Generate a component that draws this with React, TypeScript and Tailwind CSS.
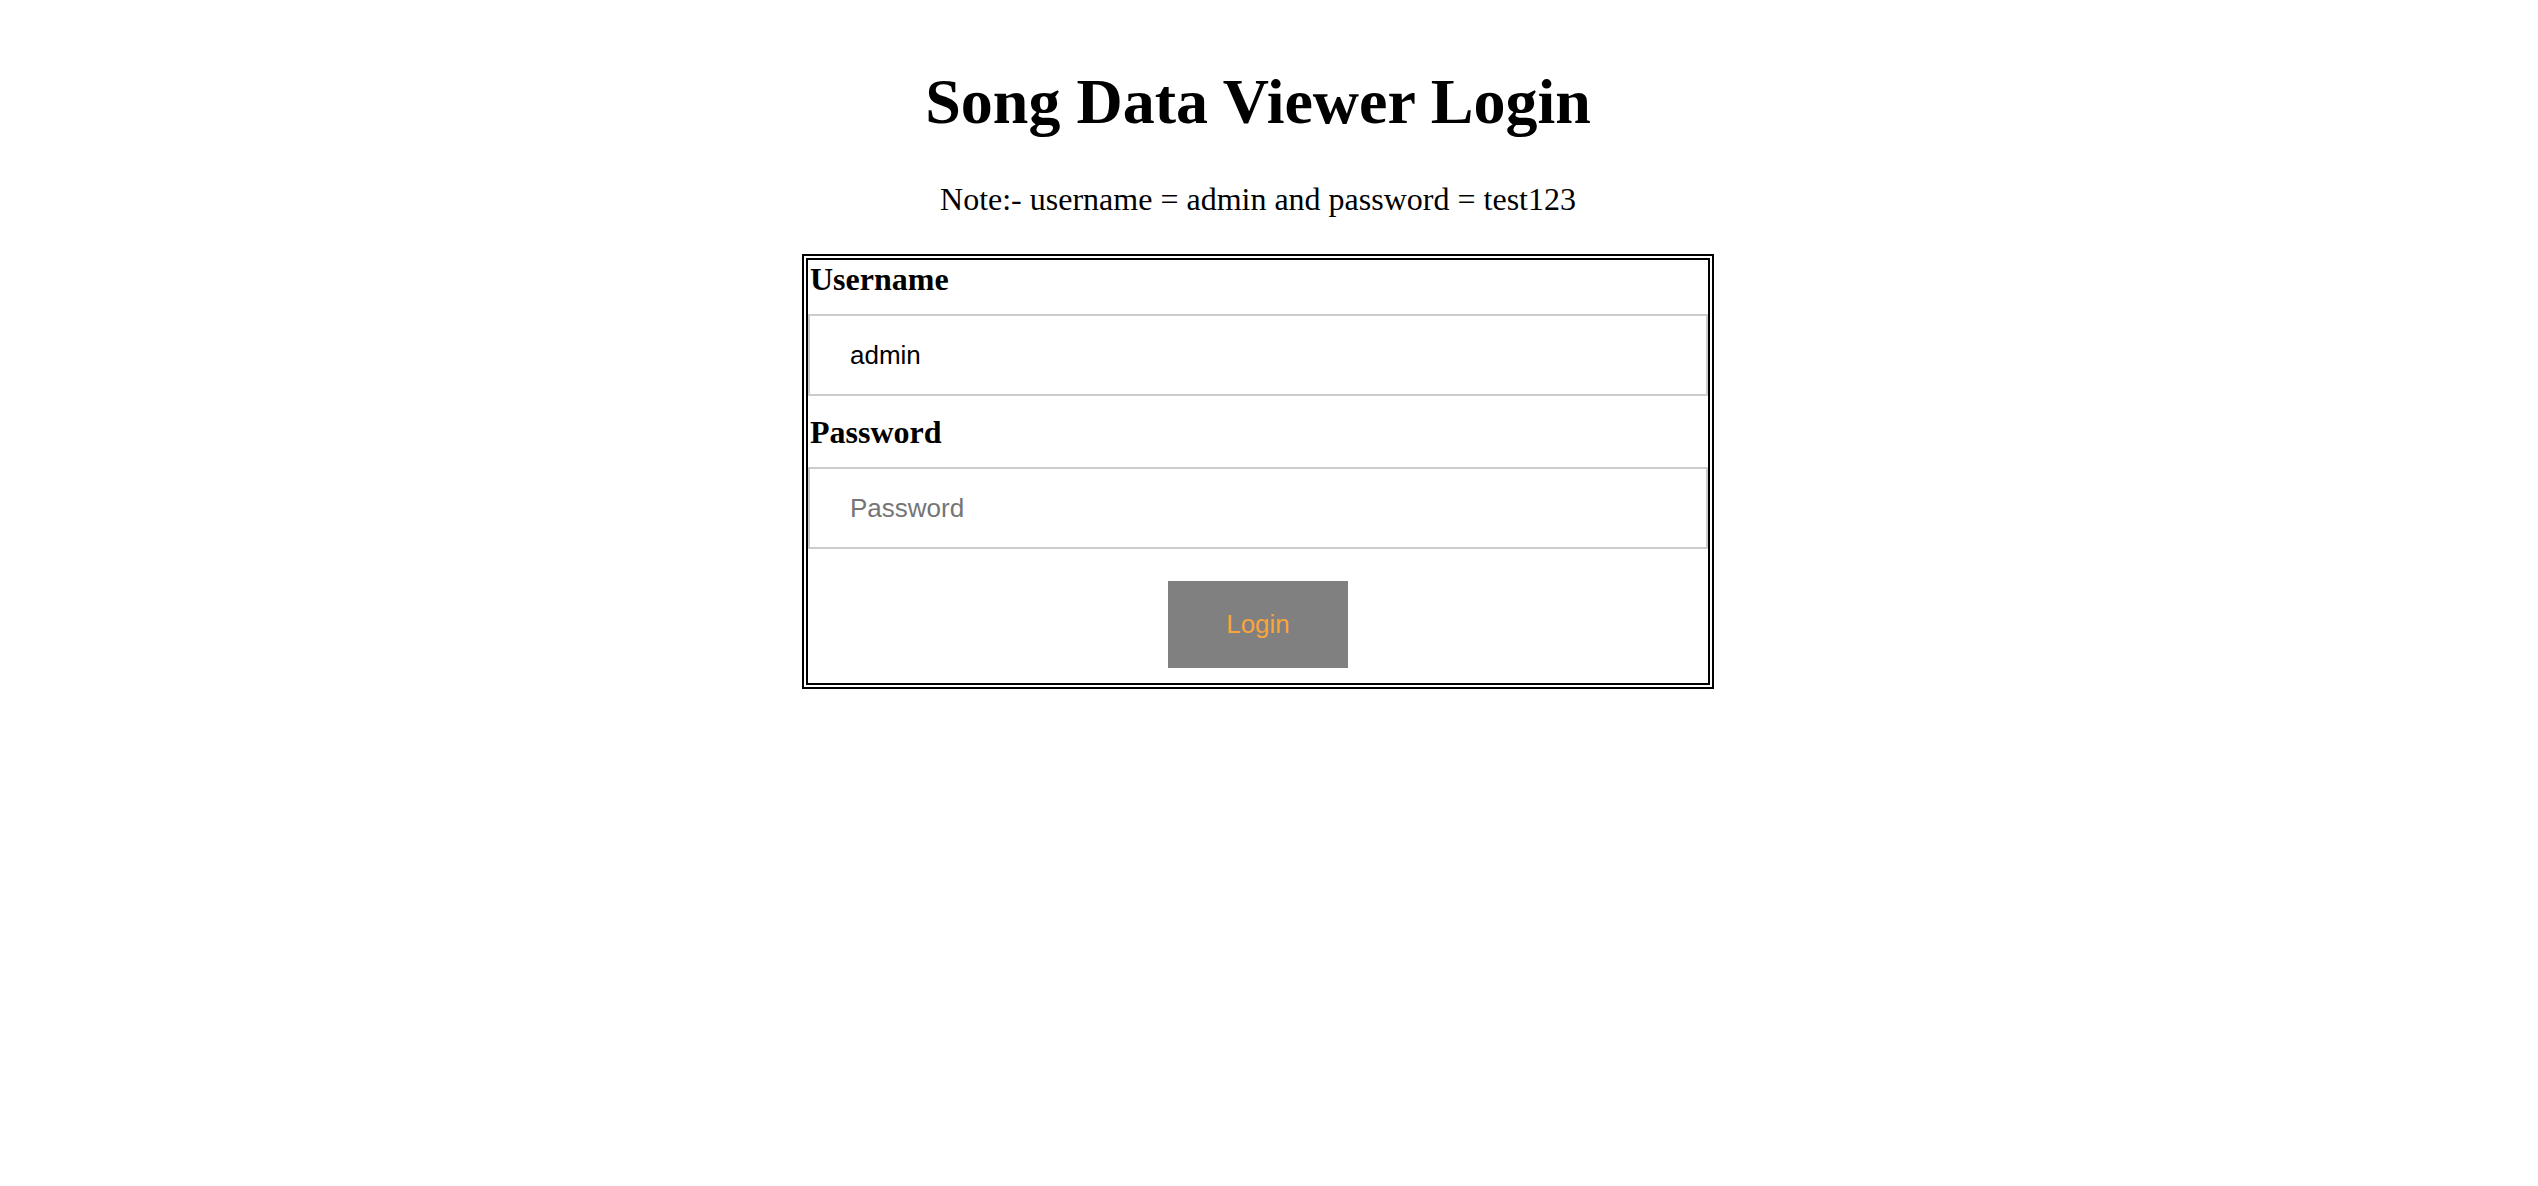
export default function App() {
  return (
    <div className="min-h-screen bg-white pr-[22px] text-black">
      <div className="flex flex-col items-center">
        {/* Heading */}
        <h1 className="pt-[65px] text-[64px] font-bold leading-[74px] [font-family:'Liberation_Serif','Times_New_Roman',serif]">
          Song Data Viewer Login
        </h1>
        <p className="mt-[42px] text-[32px] leading-[37px] [font-family:'Liberation_Serif','Times_New_Roman',serif]">
          Note:- username = admin and password = test123
        </p>

        {/* Login box */}
        <form
          className="mt-[36px] w-[912px] border-2 border-black p-[2px]"
          onSubmit={(e) => e.preventDefault()}
        >
          <div className="flex flex-col border-2 border-black pt-px pb-[15px]">
            <label className="h-[37px] px-[2px] text-[32px] font-bold leading-[37px] [font-family:'Liberation_Serif','Times_New_Roman',serif]">
              Username
            </label>
            <input
              type="text"
              defaultValue="admin"
              className="mt-[16px] mb-[16px] h-[82px] w-full border-2 border-[#cccccc] px-[40px] text-[26px] text-black outline-none [font-family:'Liberation_Sans',Arial,sans-serif]"
            />
            <label className="mt-[2px] h-[37px] px-[2px] text-[32px] font-bold leading-[37px] [font-family:'Liberation_Serif','Times_New_Roman',serif]">
              Password
            </label>
            <input
              type="password"
              placeholder="Password"
              className="mt-[16px] h-[82px] w-full border-2 border-[#cccccc] px-[40px] text-[26px] text-black outline-none placeholder:text-[#757575] [font-family:'Liberation_Sans',Arial,sans-serif]"
            />
            <div className="mt-[32px] flex justify-center">
              <button
                type="submit"
                className="h-[87px] w-[180px] bg-[#808080] text-[26px] text-[#f9a43c] [font-family:'Liberation_Sans',Arial,sans-serif]"
              >
                Login
              </button>
            </div>
          </div>
        </form>
      </div>
    </div>
  );
}
